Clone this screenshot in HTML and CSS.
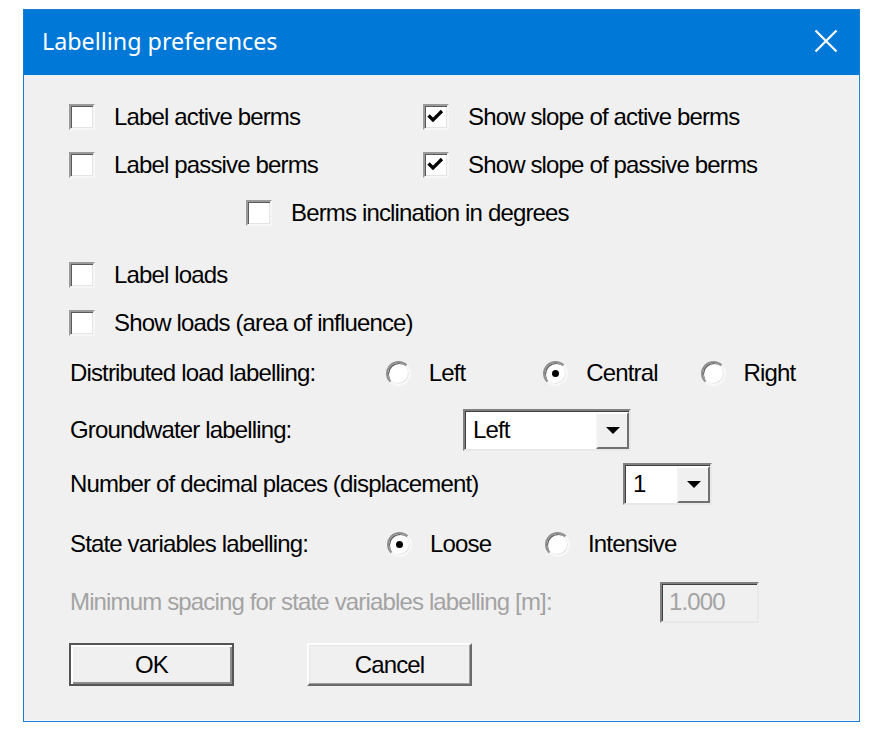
FILE: index.html
```html
<!DOCTYPE html>
<html>
<head>
<meta charset="utf-8">
<title>Labelling preferences</title>
<link rel="stylesheet" href="styles.css">
</head>
<body>
<div class="dialog">
  <div class="titlebar">
    <span class="title">Labelling preferences</span>
    <svg class="close" width="24" height="24" viewBox="0 0 24 24"><path d="M1.5 1.5 L22.5 22.5 M22.5 1.5 L1.5 22.5" stroke="#fff" stroke-width="2.2" fill="none"/></svg>
  </div>
  <div class="content">
    <div class="row r1">
      <div class="cb col-left"><span class="box"></span><span class="lbl">Label active berms</span></div>
      <div class="cb"><span class="box"><svg class="tick" width="22" height="22" viewBox="0 0 22 22"><path d="M3.5 9.5 L8 14 L17 5" stroke="#000" stroke-width="3.2" fill="none"/></svg></span><span class="lbl">Show slope of active berms</span></div>
    </div>
    <div class="row">
      <div class="cb col-left"><span class="box"></span><span class="lbl">Label passive berms</span></div>
      <div class="cb"><span class="box"><svg class="tick" width="22" height="22" viewBox="0 0 22 22"><path d="M3.5 9.5 L8 14 L17 5" stroke="#000" stroke-width="3.2" fill="none"/></svg></span><span class="lbl">Show slope of passive berms</span></div>
    </div>
    <div class="row">
      <div class="cb indent"><span class="box"></span><span class="lbl">Berms inclination in degrees</span></div>
    </div>
    <div class="row r4">
      <div class="cb"><span class="box"></span><span class="lbl">Label loads</span></div>
    </div>
    <div class="row">
      <div class="cb"><span class="box"></span><span class="lbl">Show loads (area of influence)</span></div>
    </div>
    <div class="row r6">
      <span class="field-label radio-label">Distributed load labelling:</span>
      <div class="opt"><span class="radio"></span><span class="lbl">Left</span></div>
      <div class="opt"><span class="radio on"></span><span class="lbl">Central</span></div>
      <div class="opt"><span class="radio"></span><span class="lbl">Right</span></div>
    </div>
    <div class="row r7">
      <span class="field-label gw-label">Groundwater labelling:</span>
      <div class="combo gw"><span class="value">Left</span><span class="drop"><span class="arrow"></span></span></div>
    </div>
    <div class="row r8">
      <span class="field-label dec-label">Number of decimal places (displacement)</span>
      <div class="combo dec"><span class="value">1</span><span class="drop"><span class="arrow"></span></span></div>
    </div>
    <div class="row r9">
      <span class="field-label radio-label">State variables labelling:</span>
      <div class="opt"><span class="radio on"></span><span class="lbl">Loose</span></div>
      <div class="opt"><span class="radio"></span><span class="lbl">Intensive</span></div>
    </div>
    <div class="row r10">
      <span class="field-label min-label disabled">Minimum spacing for state variables labelling [m]:</span>
      <div class="edit disabled">1.000</div>
    </div>
    <div class="buttons">
      <div class="btn default">OK</div>
      <div class="btn">Cancel</div>
    </div>
  </div>
</div>
</body>
</html>
```

FILE: styles.css
```css
html, body {
  margin: 0;
  padding: 0;
  background: #ffffff;
}

body {
  padding: 9px 0 0 23px;
  font-family: "Liberation Sans", Arial, sans-serif;
  font-size: 24px;
  letter-spacing: -0.85px;
  color: #000;
}

.dialog {
  width: 837px;
  height: 713px;
  box-sizing: border-box;
  border: 1px solid #1a7fd4;
  background: #f0f0f0;
  display: flex;
  flex-direction: column;
}

.titlebar {
  height: 65px;
  flex: none;
  background: #0078d7;
  display: flex;
  align-items: center;
  justify-content: space-between;
  padding: 0 21px 0 18px;
}

.title {
  color: #fff;
  font-family: "Noto Sans", "Open Sans", sans-serif;
  font-size: 23.3px;
  letter-spacing: 0;
  margin-top: -4px;
}

.close {
  display: block;
  margin-top: -3px;
}

.content {
  flex: 1;
  padding: 18px 0 0 45px;
  border-right: 1px solid #fbfbfb;
  border-bottom: 1px solid #fbfbfb;
}

.row {
  height: 48px;
  display: flex;
  align-items: center;
}

.r4 { margin-top: 14px; }
.r6 { margin-top: 2px; }
.r7 { margin-top: 8px; height: 49px; }
.r8 { margin-top: 5px; height: 49px; }
.r9 { margin-top: 12px; }
.r10 { margin-top: 10px; }

.cb, .opt {
  display: flex;
  align-items: center;
}

.col-left { width: 354px; }
.indent { margin-left: 177px; }

.box {
  width: 26px;
  height: 26px;
  box-sizing: border-box;
  background: #fff;
  border: 2px solid;
  border-color: #9a9a9a #f6f6f6 #f6f6f6 #9a9a9a;
  box-shadow: inset 1px 1px 0 #5a5a5a, inset -1px -1px 0 #e4e4e4;
  margin-right: 19px;
  flex: none;
  position: relative;
}

.tick {
  display: block;
}

.lbl {
  white-space: nowrap;
}

.field-label {
  white-space: nowrap;
  margin-left: 1px;
}

.radio-label { width: 317px; }
.gw-label { width: 393px; }
.dec-label { width: 553px; }
.min-label { width: 590px; }

.opt { width: 158px; }

.radio {
  width: 25px;
  height: 25px;
  box-sizing: border-box;
  border-radius: 50%;
  background: #fff;
  border: 2px solid;
  border-color: #8e8e8e #f8f8f8 #f8f8f8 #8e8e8e;
  box-shadow: inset 1px 1px 0 #5c5c5c, inset -1px -1px 0 #e6e6e6;
  margin-right: 18px;
  flex: none;
  display: flex;
  align-items: center;
  justify-content: center;
}

.radio.on::after {
  content: "";
  width: 7px;
  height: 7px;
  border-radius: 50%;
  background: #000;
}

.combo {
  height: 42px;
  box-sizing: border-box;
  background: #fff;
  border: 2px solid;
  border-color: #808080 #e8e8e8 #e8e8e8 #808080;
  box-shadow: inset 1px 1px 0 #404040;
  display: flex;
  align-items: stretch;
  justify-content: space-between;
}

.combo.gw { width: 168px; }
.combo.dec { width: 89px; }

.value {
  display: flex;
  align-items: center;
  padding-left: 8px;
}

.drop {
  width: 33px;
  box-sizing: border-box;
  background: #f0f0f0;
  border: 2px solid;
  border-color: #fff #707070 #707070 #f4f4f4;
  margin: 1px 0 0 0;
  display: flex;
  align-items: center;
  justify-content: center;
}

.arrow {
  width: 0;
  height: 0;
  border-left: 7px solid transparent;
  border-right: 7px solid transparent;
  border-top: 7px solid #000;
}

.disabled {
  color: #a3a3a3;
}

.edit {
  width: 99px;
  height: 41px;
  box-sizing: border-box;
  border: 2px solid;
  border-color: #808080 #e8e8e8 #e8e8e8 #808080;
  box-shadow: inset 1px 1px 0 #404040;
  background: #f0f0f0;
  display: flex;
  align-items: center;
  padding-left: 7px;
}

.buttons {
  display: flex;
  gap: 73px;
  margin-top: 17px;
}

.btn {
  width: 165px;
  height: 43px;
  box-sizing: border-box;
  background: #f0f0f0;
  border: 2px solid;
  border-color: #fdfdfd #6a6a6a #6a6a6a #fdfdfd;
  box-shadow: inset -1px -1px 0 #a0a0a0, inset 1px 1px 0 #e6e6e6;
  display: flex;
  align-items: center;
  justify-content: center;
}

.btn.default {
  border-color: #555;
  box-shadow: inset 2px 2px 0 #fff, inset -2px -2px 0 #8c8c8c;
}
```
